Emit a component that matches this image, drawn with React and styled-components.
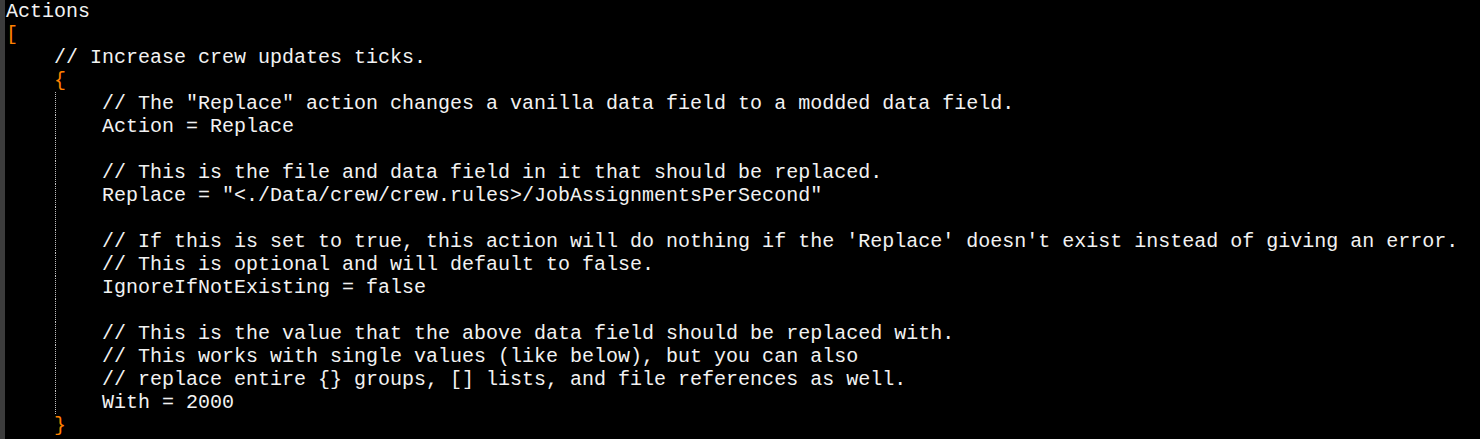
import React from 'react';
import styled, { createGlobalStyle } from 'styled-components';

const GlobalStyle = createGlobalStyle`
  html, body {
    margin: 0;
    padding: 0;
    background: #000;
  }
`;

const Editor = styled.div`
  display: flex;
  width: 1480px;
  height: 439px;
  overflow: hidden;
  background: #000;
`;

const Gutter = styled.div`
  width: 5px;
  flex-shrink: 0;
  background: #3c3c3c;
`;

const Code = styled.div`
  flex: 1;
  padding-left: 1px;
  font-family: 'Liberation Mono', 'Courier New', monospace;
  font-size: 20px;
  line-height: 23px;
  color: #f2f2f2;
`;

const Line = styled.div`
  height: 23px;
  white-space: pre;
  background-image: ${({ $guide }) =>
    $guide ? 'repeating-linear-gradient(to bottom, #bdbdbd 0 1px, transparent 1px 2px)' : 'none'};
  background-size: 1px 100%;
  background-position: 49px 0;
  background-repeat: no-repeat;
`;

const Bracket = styled.span`
  color: #ff8000;
`;

const lines = [
  { text: 'Actions' },
  { bracket: '[' },
  { text: '    // Increase crew updates ticks.' },
  { indent: '    ', bracket: '{' },
  { text: '        // The "Replace" action changes a vanilla data field to a modded data field.', guide: true },
  { text: '        Action = Replace', guide: true },
  { text: '', guide: true },
  { text: '        // This is the file and data field in it that should be replaced.', guide: true },
  { text: '        Replace = "<./Data/crew/crew.rules>/JobAssignmentsPerSecond"', guide: true },
  { text: '', guide: true },
  { text: "        // If this is set to true, this action will do nothing if the 'Replace' doesn't exist instead of giving an error.", guide: true },
  { text: '        // This is optional and will default to false.', guide: true },
  { text: '        IgnoreIfNotExisting = false', guide: true },
  { text: '', guide: true },
  { text: '        // This is the value that the above data field should be replaced with.', guide: true },
  { text: '        // This works with single values (like below), but you can also', guide: true },
  { text: '        // replace entire {} groups, [] lists, and file references as well.', guide: true },
  { text: '        With = 2000', guide: true },
  { indent: '    ', bracket: '}' },
];

const App = () => (
  <>
    <GlobalStyle />
    <Editor>
      <Gutter />
      <Code>
        {lines.map((line, index) => (
          <Line key={index} $guide={line.guide}>
            {line.bracket ? (
              <>
                {line.indent || ''}
                <Bracket>{line.bracket}</Bracket>
              </>
            ) : (
              line.text || ' '
            )}
          </Line>
        ))}
      </Code>
    </Editor>
  </>
);

export default App;
